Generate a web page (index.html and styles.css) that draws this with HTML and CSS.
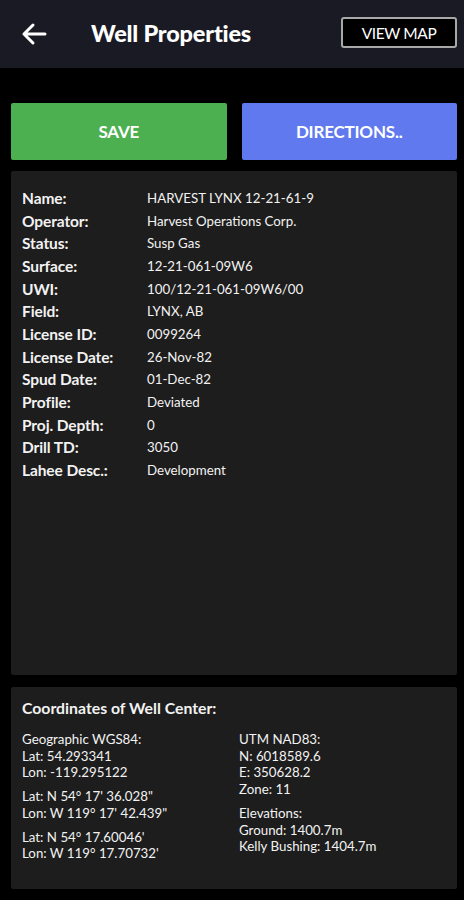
FILE: index.html
```html
<!DOCTYPE html>
<html>
<head>
<meta charset="utf-8">
<link rel="stylesheet" href="styles.css">
</head>
<body>
<header class="topbar">
  <button class="back" aria-label="Back">
    <svg width="26" height="24" viewBox="0 0 26 24"><path d="M24 12H3M12 3L3 12l9 9" fill="none" stroke="#fff" stroke-width="3" stroke-linecap="round" stroke-linejoin="round"/></svg>
  </button>
  <h1 class="title">Well Properties</h1>
  <button class="viewmap">VIEW MAP</button>
</header>
<main class="content">
  <div class="actions">
    <button class="btn save">SAVE</button>
    <button class="btn directions">DIRECTIONS..</button>
  </div>
  <section class="panel props">
    <div class="row"><span class="lbl">Name:</span><span class="val">HARVEST LYNX 12-21-61-9</span></div>
    <div class="row"><span class="lbl">Operator:</span><span class="val">Harvest Operations Corp.</span></div>
    <div class="row"><span class="lbl">Status:</span><span class="val">Susp Gas</span></div>
    <div class="row"><span class="lbl">Surface:</span><span class="val">12-21-061-09W6</span></div>
    <div class="row"><span class="lbl">UWI:</span><span class="val">100/12-21-061-09W6/00</span></div>
    <div class="row"><span class="lbl">Field:</span><span class="val">LYNX, AB</span></div>
    <div class="row"><span class="lbl">License ID:</span><span class="val">0099264</span></div>
    <div class="row"><span class="lbl">License Date:</span><span class="val">26-Nov-82</span></div>
    <div class="row"><span class="lbl">Spud Date:</span><span class="val">01-Dec-82</span></div>
    <div class="row"><span class="lbl">Profile:</span><span class="val">Deviated</span></div>
    <div class="row"><span class="lbl">Proj. Depth:</span><span class="val">0</span></div>
    <div class="row"><span class="lbl">Drill TD:</span><span class="val">3050</span></div>
    <div class="row"><span class="lbl">Lahee Desc.:</span><span class="val">Development</span></div>
  </section>
  <section class="panel coords">
    <h2 class="coords-title">Coordinates of Well Center:</h2>
    <div class="cols">
      <div class="col">
        <div class="grp">
          <div>Geographic WGS84:</div>
          <div>Lat: 54.293341</div>
          <div>Lon: -119.295122</div>
        </div>
        <div class="grp">
          <div>Lat: N 54° 17' 36.028"</div>
          <div>Lon: W 119° 17' 42.439"</div>
        </div>
        <div class="grp">
          <div>Lat: N 54° 17.60046'</div>
          <div>Lon: W 119° 17.70732'</div>
        </div>
      </div>
      <div class="col">
        <div class="grp">
          <div>UTM NAD83:</div>
          <div>N: 6018589.6</div>
          <div>E: 350628.2</div>
          <div>Zone: 11</div>
        </div>
        <div class="grp">
          <div>Elevations:</div>
          <div>Ground: 1400.7m</div>
          <div>Kelly Bushing: 1404.7m</div>
        </div>
      </div>
    </div>
  </section>
</main>
</body>
</html>
```

FILE: styles.css
```css
* { box-sizing: border-box; }
html, body {
  margin: 0;
  padding: 0;
  background: #000;
  font-family: Lato, "Open Sans", sans-serif;
  color: #f2f2f2;
}
.topbar {
  height: 68px;
  background: #1a1a24;
  display: flex;
  align-items: center;
  padding: 0 7px 0 21px;
}
.back {
  background: none;
  border: 0;
  padding: 0;
  width: 26px;
  height: 24px;
  display: flex;
  margin-top: -1px;
}
.title {
  margin: -2px 0 0 44px;
  font-size: 23.5px;
  font-weight: 900;
  color: #fff;
  flex: 1;
  letter-spacing: -0.2px;
}
.viewmap {
  width: 116px;
  height: 31px;
  background: #000;
  border: 2px solid #a8a8a8;
  border-radius: 3px;
  color: #fff;
  font-family: Lato, sans-serif;
  font-size: 15.5px;
  font-weight: 400;
  letter-spacing: -0.4px;
  padding: 0;
  margin-top: -3px;
}
.content {
  padding: 35px 7px 0 11px;
}
.actions {
  display: flex;
  gap: 15px;
}
.btn {
  flex: 1;
  height: 57px;
  border: 0;
  border-radius: 2px;
  color: #fff;
  font-family: Lato, sans-serif;
  font-size: 17px;
  font-weight: 700;
  letter-spacing: -0.2px;
}
.save { background: #4caf50; }
.directions { background: #6079ef; }
.panel {
  background: #1d1d1d;
  border-radius: 2px;
}
.props {
  margin-top: 11px;
  height: 504px;
  padding: 16px 11px 0;
}
.row {
  display: flex;
  height: 22.67px;
  line-height: 22.67px;
}
.lbl {
  width: 125px;
  flex: none;
  font-size: 15.5px;
  font-weight: 700;
  letter-spacing: -0.1px;
}
.val {
  font-size: 13.3px;
  letter-spacing: 0;
}
.coords {
  margin-top: 12px;
  height: 202px;
  padding: 12px 11px 0;
}
.coords-title {
  margin: 0;
  font-size: 15.8px;
  font-weight: 700;
  line-height: 18px;
  letter-spacing: 0;
}
.cols {
  display: grid;
  grid-template-columns: 217px 1fr;
  margin-top: 14px;
  font-size: 13.3px;
  letter-spacing: 0;
  line-height: 16.7px;
}
.grp + .grp { margin-top: 7px; }
```
